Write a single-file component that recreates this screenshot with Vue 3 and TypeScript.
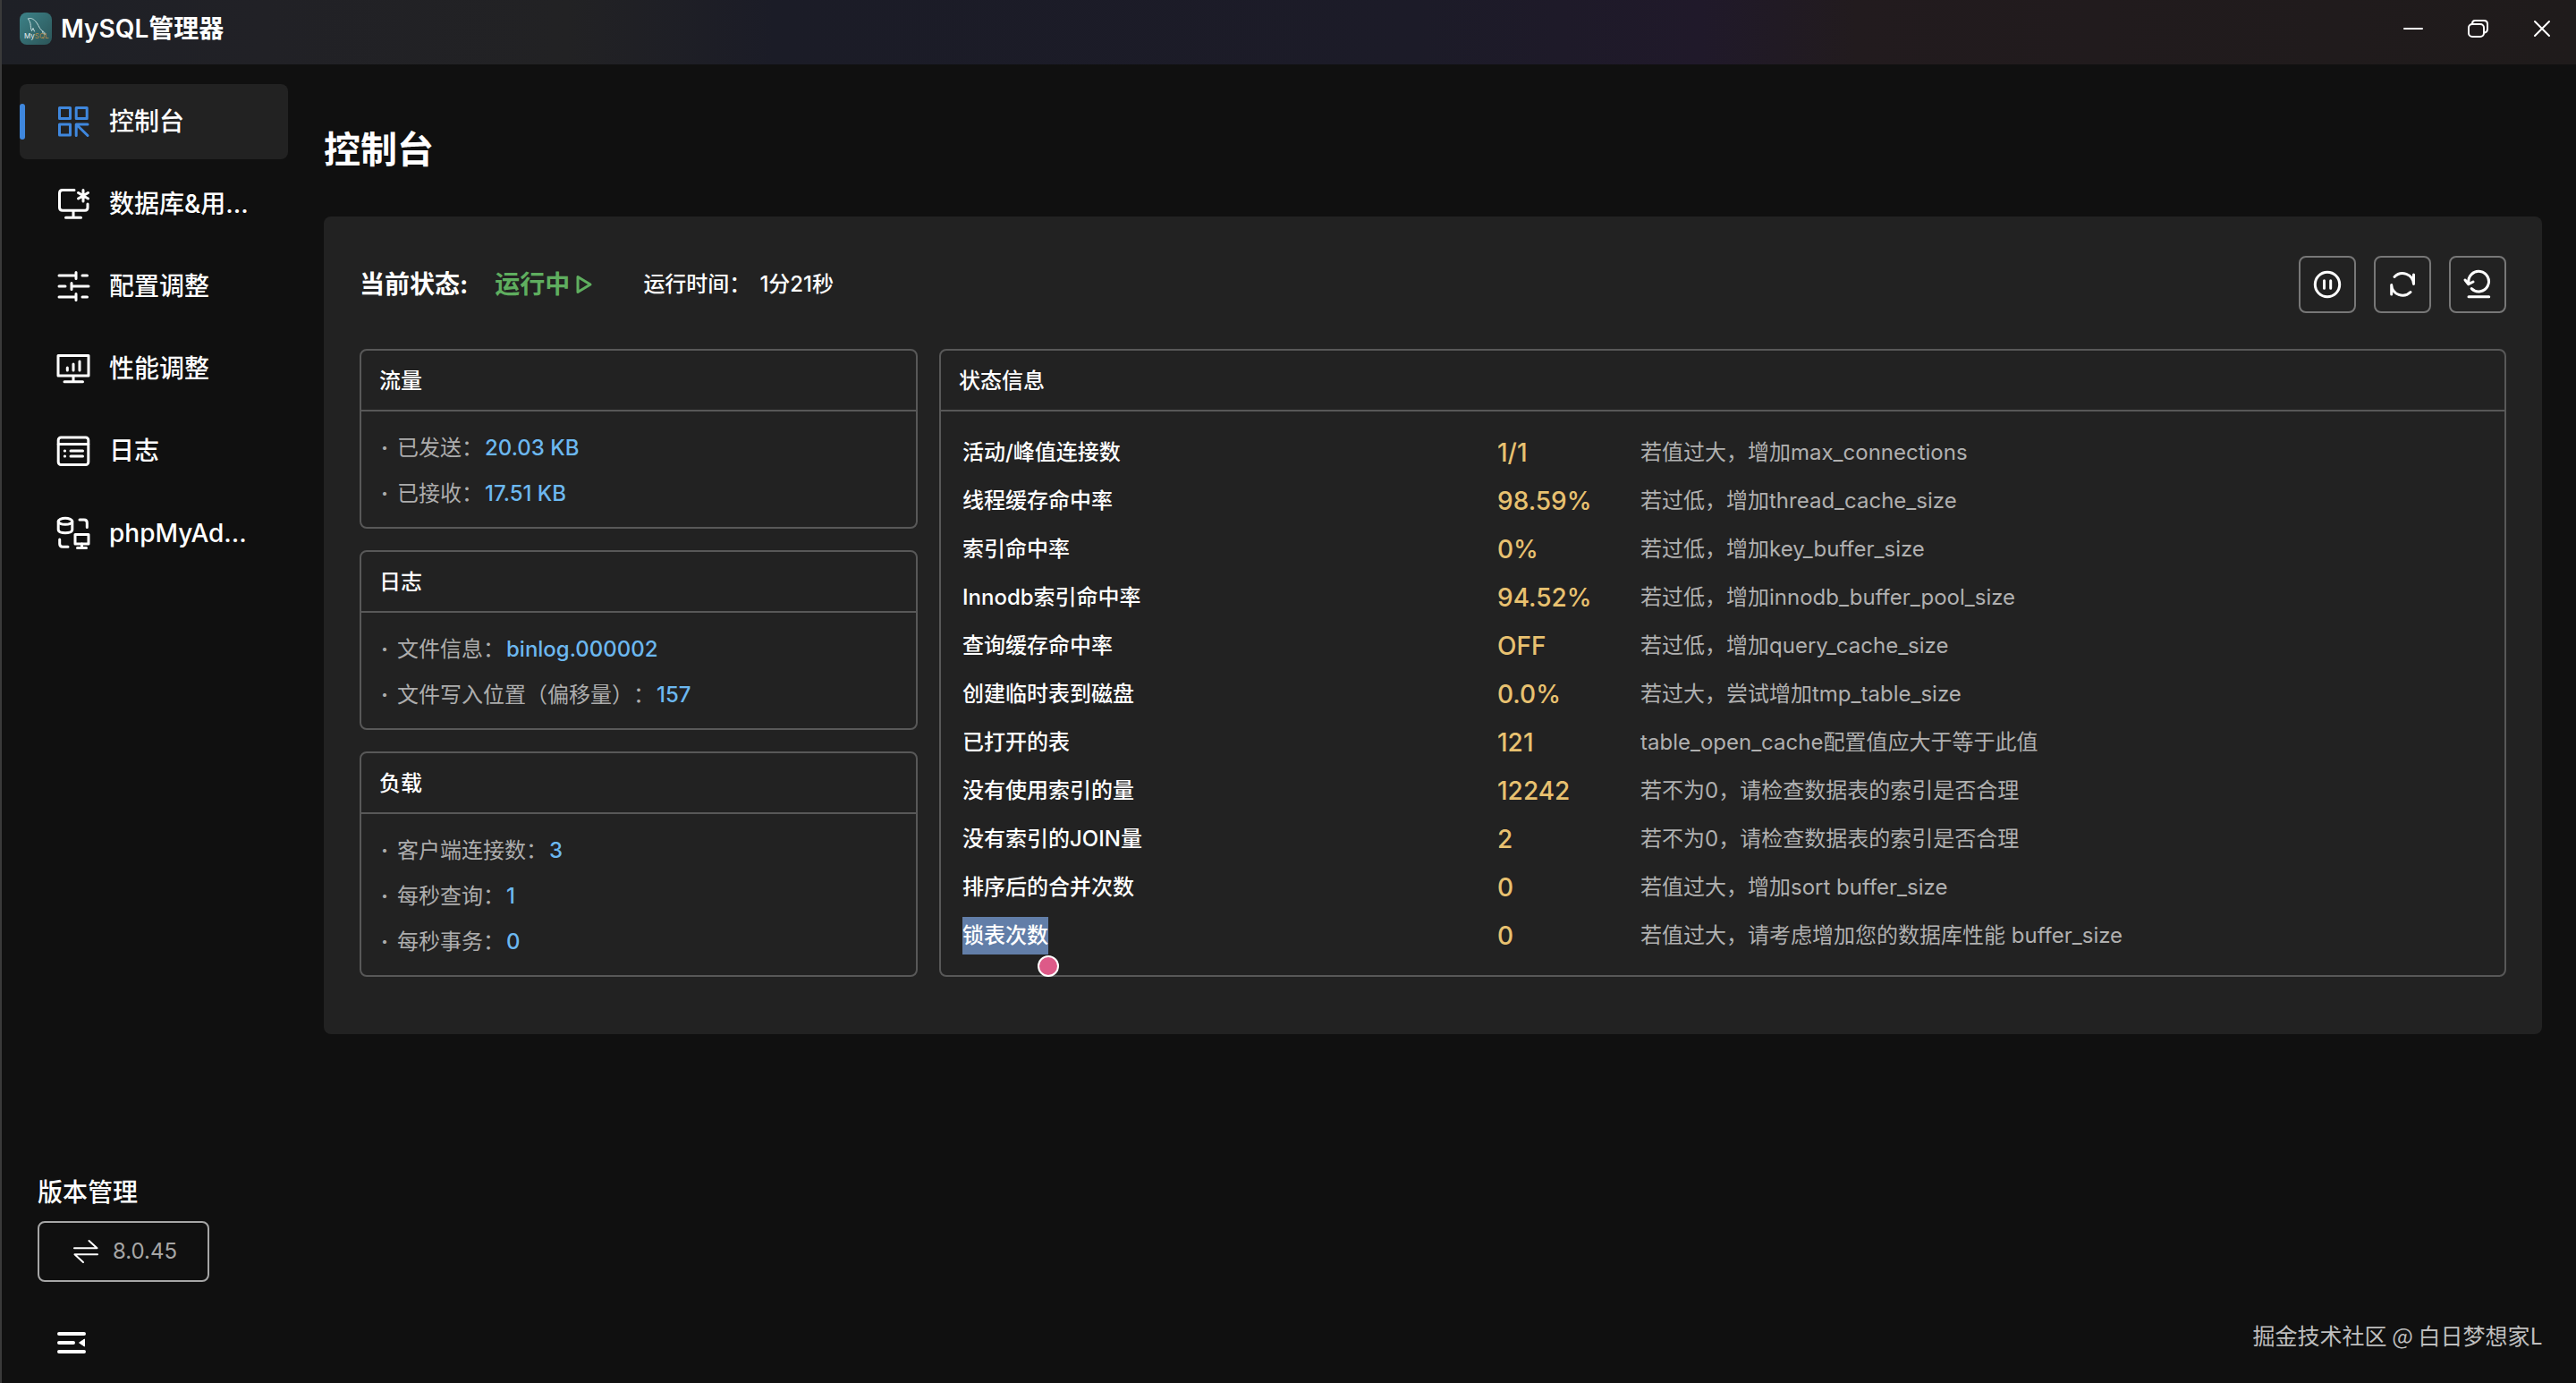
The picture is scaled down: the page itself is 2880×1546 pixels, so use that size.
<script setup lang="ts">
import { ref } from 'vue'

interface NavItem {
  id: string
  label: string
}

interface InfoRow {
  label: string
  value: string
}

interface InfoCard {
  title: string
  rows: InfoRow[]
}

interface StatusRow {
  name: string
  value: string
  hint: string
  selected?: boolean
}

const active = ref<string>('console')

const navItems: NavItem[] = [
  { id: 'console', label: '控制台' },
  { id: 'database', label: '数据库&用...' },
  { id: 'config', label: '配置调整' },
  { id: 'performance', label: '性能调整' },
  { id: 'log', label: '日志' },
  { id: 'phpmyadmin', label: 'phpMyAd...' },
]

const cards: InfoCard[] = [
  {
    title: '流量',
    rows: [
      { label: '已发送：', value: '20.03 KB' },
      { label: '已接收：', value: '17.51 KB' },
    ],
  },
  {
    title: '日志',
    rows: [
      { label: '文件信息：', value: 'binlog.000002' },
      { label: '文件写入位置（偏移量）：', value: '157' },
    ],
  },
  {
    title: '负载',
    rows: [
      { label: '客户端连接数：', value: '3' },
      { label: '每秒查询：', value: '1' },
      { label: '每秒事务：', value: '0' },
    ],
  },
]

const statusRows: StatusRow[] = [
  { name: '活动/峰值连接数', value: '1/1', hint: '若值过大，增加max_connections' },
  { name: '线程缓存命中率', value: '98.59%', hint: '若过低，增加thread_cache_size' },
  { name: '索引命中率', value: '0%', hint: '若过低，增加key_buffer_size' },
  { name: 'Innodb索引命中率', value: '94.52%', hint: '若过低，增加innodb_buffer_pool_size' },
  { name: '查询缓存命中率', value: 'OFF', hint: '若过低，增加query_cache_size' },
  { name: '创建临时表到磁盘', value: '0.0%', hint: '若过大，尝试增加tmp_table_size' },
  { name: '已打开的表', value: '121', hint: 'table_open_cache配置值应大于等于此值' },
  { name: '没有使用索引的量', value: '12242', hint: '若不为0，请检查数据表的索引是否合理' },
  { name: '没有索引的JOIN量', value: '2', hint: '若不为0，请检查数据表的索引是否合理' },
  { name: '排序后的合并次数', value: '0', hint: '若值过大，增加sort buffer_size' },
  { name: '锁表次数', value: '0', hint: '若值过大，请考虑增加您的数据库性能 buffer_size', selected: true },
]
</script>

<template>
  <div class="app">
    <header class="titlebar">
      <svg class="logo" viewBox="0 0 36 36" aria-hidden="true">
        <defs>
          <linearGradient id="logo-bg" x1="0" y1="0" x2="1" y2="1">
            <stop offset="0" stop-color="#3c8288" />
            <stop offset="1" stop-color="#2c5558" />
          </linearGradient>
        </defs>
        <rect width="36" height="36" rx="8" fill="url(#logo-bg)" />
        <path
          d="M9.500 7C12 5.500 15 7 17.500 9.500C20.500 12.500 21.500 17 24 19.500C26 21 28 21.500 28.500 24.500C27 23.500 25.500 23 25.500 21.500M9.500 7C10.500 9 11.500 10 12 12.500C12.500 15 12 17.500 13.500 20.500L15 17.500L16.500 21"
          fill="none" stroke="#c5dcdd" stroke-width="1" stroke-linecap="round" stroke-linejoin="round"
        />
        <text x="5" y="29" class="logo-text" fill="#e8f0f0">My<tspan fill="#b08a4a">SQL</tspan></text>
      </svg>
      <span class="app-name">MySQL管理器</span>
      <div class="window-controls">
        <button type="button" aria-label="最小化">
          <svg width="24" height="24" viewBox="0 0 24 24"><path d="M2 12H22" /></svg>
        </button>
        <button type="button" aria-label="还原">
          <svg width="24" height="24" viewBox="0 0 24 24">
            <rect x="2" y="7" width="17" height="14" rx="4" />
            <path d="M6 6.500C6 4.500 7 3 9 3H19C21.500 3 23 4.500 23 7V12.500C23 15 22 16 20 16.500" />
          </svg>
        </button>
        <button type="button" aria-label="关闭">
          <svg width="24" height="24" viewBox="0 0 24 24"><path d="M4 4L20 20M20 4L4 20" /></svg>
        </button>
      </div>
    </header>

    <div class="body">
      <aside class="sidebar">
        <nav class="nav">
          <a
            v-for="item in navItems"
            :key="item.id"
            :href="'#' + item.id"
            class="nav-item"
            :class="{ active: active === item.id }"
            @click.prevent="active = item.id"
          >
            <svg class="nav-icon" viewBox="0 0 36 36" aria-hidden="true">
              <template v-if="item.id === 'console'">
                <rect x="2.500" y="2.500" width="12" height="12" />
                <rect x="21.200" y="2.500" width="12" height="12" />
                <rect x="2.500" y="21" width="12" height="12" />
                <path d="M34 21H21.200V33.500M21.500 21.300L34 33.500" />
              </template>
              <template v-else-if="item.id === 'database'">
                <path d="M19 2.500H6Q2.500 2.500 2.500 6V22Q2.500 25.200 6 25.200H31Q34 25.200 34 22V18M18 25.200V33M9.500 33.300H26.500" />
                <path d="M29 2.500V15M23.500 5.500L34.500 12M34.500 5.500L23.500 12" />
              </template>
              <template v-else-if="item.id === 'config'">
                <path d="M2 6H20M21 2.500V9.500M28 6H33.500M2 18H9M16 14.500V21.500M16 18H35M2 30H20M21 26.500V33.500M28 30H33.500" />
              </template>
              <template v-else-if="item.id === 'performance'">
                <rect x="1" y="3.500" width="34" height="22.500" />
                <path d="M18 27V32M8 32.700H28.500M11.300 17V20M18 13V20M25 10V20" />
              </template>
              <template v-else-if="item.id === 'log'">
                <rect x="1.200" y="3" width="33.600" height="30.500" rx="3" />
                <path d="M1.200 10.500H34.800M8.300 18H8.600M15 18H28.500M8.300 24H8.600M15 24H28.500" />
              </template>
              <template v-else>
                <ellipse cx="9" cy="4.800" rx="7.800" ry="3.500" />
                <path d="M1.200 4.800V14C1.200 19 16.800 19 16.800 14V4.800" />
                <path d="M25 3H30Q33.300 3 33.300 6.500V11.500M2.700 25V30Q2.700 33.300 6 33.300H12" />
                <rect x="20" y="19.500" width="15" height="10.500" />
                <path d="M27.500 30V34M22.500 34.500H32.500" />
              </template>
            </svg>
            <span>{{ item.label }}</span>
          </a>
        </nav>

        <div class="sidebar-foot">
          <div class="version-title">版本管理</div>
          <button type="button" class="version-btn">
            <svg width="28" height="28" viewBox="0 0 28 28" aria-hidden="true">
              <path d="M1 10.300H26.500L17.500 2M27 17.300H1.500L11 26" />
            </svg>
            <span>8.0.45</span>
          </button>
          <button type="button" class="collapse-btn" aria-label="收起菜单">
            <svg width="32" height="24" viewBox="0 0 32 24">
              <path d="M2 2H30M2 12H18M2 22H30" fill="none" stroke="#fff" stroke-width="4" stroke-linecap="round" />
              <path d="M24.500 12L30.500 8V16Z" fill="#fff" stroke="#fff" stroke-width="1" stroke-linejoin="round" />
            </svg>
          </button>
        </div>
      </aside>

      <main class="main">
        <h1>控制台</h1>

        <section class="panel">
          <div class="toolbar">
            <span class="state-label">当前状态:</span>
            <span class="state-value">
              运行中
              <svg width="20" height="24" viewBox="0 0 20 24" aria-hidden="true"><path d="M3 3.500V20.500L17 12Z" /></svg>
            </span>
            <span class="uptime-label">运行时间：</span>
            <span class="uptime-value">1分21秒</span>
            <div class="actions">
              <button type="button" aria-label="暂停">
                <svg width="36" height="36" viewBox="0 0 36 36">
                  <circle cx="18" cy="18" r="13.700" />
                  <path d="M14.500 13.700V22.300M21.700 13.700V22.300" />
                </svg>
              </button>
              <button type="button" aria-label="重启">
                <svg width="36" height="36" viewBox="0 0 36 36">
                  <path d="M9 9.500A12.500 12.500 0 0 1 30.500 17.500V7M5.700 29V18.500A12.500 12.500 0 0 0 27 26.500" />
                </svg>
              </button>
              <button type="button" aria-label="重载">
                <svg width="36" height="36" viewBox="0 0 36 36">
                  <path d="M8 16.300A11.300 11.300 0 1 1 11.200 22.600M4 13L7.800 17.800L13 15M8 31.700H30.700" />
                </svg>
              </button>
            </div>
          </div>

          <div class="grid">
            <div class="column">
              <article v-for="card in cards" :key="card.title" class="card">
                <h2>{{ card.title }}</h2>
                <ul>
                  <li v-for="row in card.rows" :key="row.label">
                    <span class="dot">·</span>
                    <span>{{ row.label }}</span>
                    <span class="info-value">{{ row.value }}</span>
                  </li>
                </ul>
              </article>
            </div>

            <article class="card">
              <h2>状态信息</h2>
              <table>
                <tbody>
                  <tr v-for="row in statusRows" :key="row.name">
                    <th scope="row">
                      <span :class="{ selected: row.selected }">{{ row.name }}<i v-if="row.selected" class="handle"></i></span>
                    </th>
                    <td class="value">{{ row.value }}</td>
                    <td class="hint">{{ row.hint }}</td>
                  </tr>
                </tbody>
              </table>
            </article>
          </div>
        </section>

        <footer class="credit">掘金技术社区 @ 白日梦想家L</footer>
      </main>
    </div>
  </div>
</template>

<style>
body {
  background: #101010;
}
</style>

<style scoped>
.app {
  box-sizing: border-box;
  display: flex;
  flex-direction: column;
  min-height: 100vh;
  border-left: 2px solid #3a3a3a;
  background: #101010;
  color: #fff;
  font-family: "Inter", "Noto Sans CJK SC", sans-serif;
  font-size: 24px;
  line-height: 40px;
  text-spacing-trim: space-all;
}

button {
  padding: 0;
  border: 0;
  background: none;
  color: inherit;
  font: inherit;
  cursor: pointer;
}

svg {
  display: block;
  flex: none;
}

.titlebar {
  display: flex;
  align-items: center;
  height: 72px;
  padding: 0 2px 0 20px;
  box-sizing: border-box;
  background: linear-gradient(90deg, #1e2026 0%, #212126 10%, #222224 22%, #1b1c27 30%, #1c1b28 55%, #20192a 66%, #221b1e 72%, #1f1b1b 100%);
}

.logo {
  width: 36px;
  height: 36px;
  margin: -8px 10px 0 0;
}

.logo-text {
  font-size: 8px;
}

.app-name {
  margin-top: -8px;
  font-size: 28px;
  font-weight: 600;
}

.window-controls {
  display: flex;
  margin-left: auto;
}

.window-controls button {
  display: flex;
  align-items: center;
  justify-content: center;
  width: 72px;
  height: 64px;
  margin-bottom: 8px;
}

.window-controls svg {
  fill: none;
  stroke: #fff;
  stroke-width: 2;
  stroke-linecap: round;
}

.body {
  display: flex;
  flex: 1;
}

.sidebar {
  display: flex;
  flex: none;
  flex-direction: column;
  width: 300px;
  padding: 22px 20px;
}

.nav {
  display: flex;
  flex-direction: column;
  gap: 8px;
}

.nav-item {
  position: relative;
  display: flex;
  align-items: center;
  gap: 22px;
  height: 84px;
  padding-left: 42px;
  border-radius: 8px;
  color: #fff;
  font-size: 28px;
  font-weight: 500;
  text-decoration: none;
}

.nav-item.active {
  background: #222;
}

.nav-item.active::before {
  content: "";
  position: absolute;
  top: 22px;
  left: 0;
  width: 6px;
  height: 40px;
  border-radius: 3px;
  background: #3f87dd;
}

.nav-icon {
  width: 36px;
  height: 36px;
  overflow: visible;
  fill: none;
  stroke: #fff;
  stroke-width: 3;
  stroke-linecap: round;
  stroke-linejoin: round;
}

.active .nav-icon {
  stroke: #3f87dd;
}

.sidebar-foot {
  display: flex;
  flex-direction: column;
  align-items: flex-start;
  margin-top: auto;
  padding: 0 20px 11px;
}

.version-title {
  font-size: 28px;
  font-weight: 500;
}

.version-btn {
  display: flex;
  align-items: center;
  justify-content: center;
  gap: 16px;
  box-sizing: border-box;
  width: 192px;
  height: 68px;
  margin: 12px 0 56px;
  padding-left: 4px;
  border: 2px solid #a6a6a6;
  border-radius: 8px;
  color: #a6a6a6;
}

.version-btn svg {
  fill: none;
  stroke: #fff;
  stroke-width: 2;
  stroke-linecap: round;
  stroke-linejoin: round;
}

.collapse-btn {
  margin-left: 22px;
}

.main {
  display: flex;
  flex: 1;
  flex-direction: column;
  min-width: 0;
  padding: 0 38px 34px 20px;
}

h1 {
  margin: 67px 0 47px;
  font-size: 41px;
  font-weight: 700;
  line-height: 56px;
}

.panel {
  padding: 44px 40px 64px;
  border-radius: 8px;
  background: #222;
}

.toolbar {
  display: flex;
  align-items: center;
  height: 64px;
  margin-bottom: 40px;
}

.state-label,
.state-value {
  font-size: 28px;
  font-weight: 700;
}

.state-value {
  display: flex;
  align-items: center;
  gap: 6px;
  margin: 0 56px 0 30px;
  color: #5fae5f;
}

.state-value svg {
  fill: none;
  stroke: #5fae5f;
  stroke-width: 3;
  stroke-linejoin: round;
}

.uptime-label,
.uptime-value {
  font-weight: 500;
}

.uptime-value {
  margin-left: 10px;
}

.actions {
  display: flex;
  gap: 20px;
  margin-left: auto;
}

.actions button {
  display: flex;
  align-items: center;
  justify-content: center;
  box-sizing: border-box;
  width: 64px;
  height: 64px;
  border: 2px solid #777;
  border-radius: 8px;
}

.actions svg {
  fill: none;
  stroke: #fff;
  stroke-width: 3;
  stroke-linecap: round;
  stroke-linejoin: round;
}

.grid {
  display: grid;
  grid-template-columns: 26% 1fr;
  gap: 24px;
}

.column {
  display: flex;
  flex-direction: column;
  gap: 24px;
}

.card {
  border: 2px solid #585858;
  border-radius: 8px;
}

h2 {
  margin: 0;
  padding: 2px 20px 0;
  border-bottom: 2px solid #585858;
  font-size: 24px;
  font-weight: 500;
  line-height: 64px;
}

ul {
  margin: 0;
  padding: 15px 20px 12px;
  list-style: none;
}

li {
  display: flex;
  line-height: 51px;
  color: #adadad;
}

.dot {
  width: 20px;
  font-weight: 700;
  text-align: center;
  text-indent: -8px;
}

.info-value {
  margin-left: 2px;
  color: #6cb8f0;
  font-weight: 500;
}

table {
  width: 100%;
  margin-top: 19px;
  border-collapse: collapse;
  table-layout: fixed;
}

tr {
  height: 54px;
}

th,
td {
  padding: 0;
  line-height: 42px;
  text-align: left;
  white-space: nowrap;
}

th {
  width: 598px;
  padding-left: 24px;
  font-weight: 500;
}

.value {
  width: 160px;
  color: #e8c170;
  font-size: 28px;
  font-weight: 500;
}

.hint {
  color: #b0b0b0;
}

.selected {
  position: relative;
  display: inline-block;
  background: #627ea8;
}

.handle {
  position: absolute;
  right: -12px;
  bottom: -25px;
  box-sizing: border-box;
  width: 24px;
  height: 24px;
  border: 2px solid #fff;
  border-radius: 50%;
  background: #dd5a88;
}

.credit {
  margin-top: auto;
  color: #bebebe;
  font-family: "Noto Sans CJK SC", sans-serif;
  font-size: 25px;
  text-align: right;
}
</style>
